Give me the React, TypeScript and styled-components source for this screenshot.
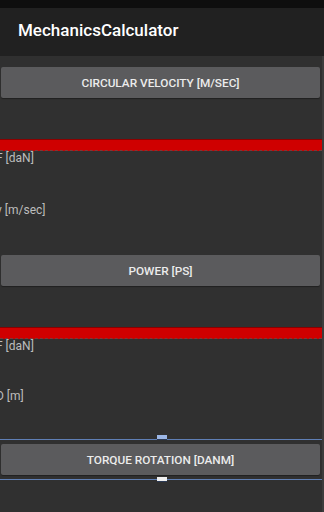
import React from 'react';
import styled, { createGlobalStyle } from 'styled-components';

const Global = createGlobalStyle`
  html, body {
    margin: 0;
    padding: 0;
    background: #303030;
    font-family: Roboto, "Liberation Sans", sans-serif;
    overflow: hidden;
  }
`;

const Screen = styled.div`
  width: 324px;
  height: 512px;
  display: flex;
  flex-direction: column;
  background: #303030;
  overflow: hidden;
`;

const StatusBar = styled.div`
  height: 8px;
  background: #0e0e0e;
`;

const AppBar = styled.header`
  height: 48px;
  background: #212121;
  display: flex;
  align-items: center;
  padding: 0 0 4px 18px;
  box-sizing: border-box;
  color: #ffffff;
  font-size: 17px;
  font-weight: 500;
`;

const Content = styled.main`
  flex: 1;
  display: flex;
  flex-direction: column;
  border-right: 2px solid #3c3c3c;
  padding-top: 11px;
`;

const ActionButton = styled.button`
  height: 31px;
  margin: 0 2px 0 1px;
  border: none;
  border-radius: 2px;
  background: #5b5b5d;
  color: #ececec;
  font-family: Roboto, "Liberation Sans", sans-serif;
  font-size: 11.8px;
  font-weight: 500;
  text-transform: uppercase;
  box-shadow: 0 1px 1px rgba(0, 0, 0, 0.35);
`;

const Spacer = styled.div<{ h: number }>`
  height: ${p => p.h}px;
  flex-shrink: 0;
`;

const RedBar = styled.div`
  height: 10px;
  background: #cf0000;
  border-top: 1px solid #8a0000;
  border-bottom: 1px dashed #7a3a3a;
`;

const Field = styled.div<{ h: number }>`
  height: ${p => p.h}px;
  margin-left: -4px;
  color: #bdbdbd;
  font-size: 12px;
  line-height: 14px;
`;

const Divider = styled.div`
  position: relative;
  height: 1px;
  background: #5f7fb5;
`;

const Handle = styled.span<{ top?: boolean }>`
  position: absolute;
  left: 157px;
  top: ${p => (p.top ? '-4px' : '-2px')};
  width: 10px;
  height: 4px;
  background: ${p => (p.top ? '#9bb6e6' : '#f0f0f0')};
  border-bottom: 1px solid #2b3a55;
`;

export default function App() {
  return (
    <Screen>
      <Global />
      <StatusBar />
      <AppBar>MechanicsCalculator</AppBar>
      <Content>
        <ActionButton>Circular Velocity [m/sec]</ActionButton>
        <Spacer h={41} />
        <RedBar />
        <Field h={52}>F [daN]</Field>
        <Field h={52}>v [m/sec]</Field>
        <ActionButton>Power [PS]</ActionButton>
        <Spacer h={41} />
        <RedBar />
        <Field h={50}>F [daN]</Field>
        <Field h={50}>D [m]</Field>
        <Divider>
          <Handle top />
        </Divider>
        <Spacer h={4} />
        <ActionButton>Torque Rotation [daNm]</ActionButton>
        <Spacer h={4} />
        <Divider>
          <Handle />
        </Divider>
      </Content>
    </Screen>
  );
}
